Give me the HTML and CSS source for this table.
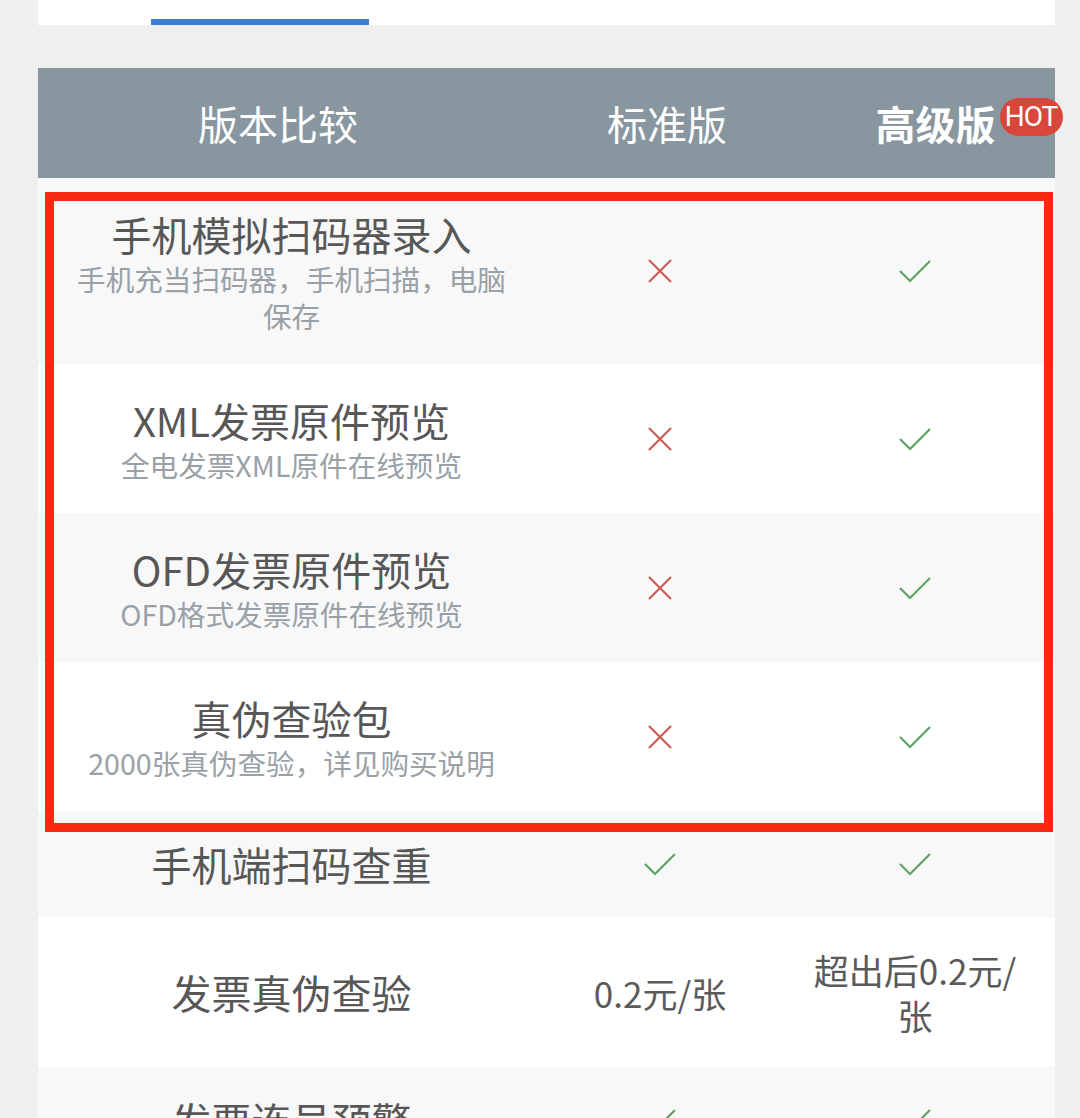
FILE: index.html
```html
<!DOCTYPE html>
<html lang="zh-CN">
<head>
  <meta charset="UTF-8" />
  <meta name="viewport" content="width=device-width, initial-scale=1" />
  <title>版本比较</title>
  <link rel="stylesheet" href="styles.css">
</head>
<body>
  <div class="page">
    <div class="tabs">
      <span class="tab-bar"></span>
    </div>

    <div class="compare">
      <div class="head">
        <div class="cell">版本比较</div>
        <div class="cell">标准版</div>
        <div class="cell"><span class="pro">高级版<span class="hot">HOT</span></span></div>
      </div>

      <div class="row grey">
        <div class="feature">
          <div class="title">手机模拟扫码器录入</div>
          <div class="desc">手机充当扫码器，手机扫描，电脑保存</div>
        </div>
        <div class="cell"><svg class="no" viewBox="0 0 26 26"><path d="M2 2L24 24M24 2L2 24"/></svg></div>
        <div class="cell"><svg class="yes" viewBox="0 0 32 24"><path d="M1 12L11 22L31 2"/></svg></div>
      </div>

      <div class="row">
        <div class="feature">
          <div class="title">XML发票原件预览</div>
          <div class="desc">全电发票XML原件在线预览</div>
        </div>
        <div class="cell"><svg class="no" viewBox="0 0 26 26"><path d="M2 2L24 24M24 2L2 24"/></svg></div>
        <div class="cell"><svg class="yes" viewBox="0 0 32 24"><path d="M1 12L11 22L31 2"/></svg></div>
      </div>

      <div class="row grey">
        <div class="feature">
          <div class="title">OFD发票原件预览</div>
          <div class="desc">OFD格式发票原件在线预览</div>
        </div>
        <div class="cell"><svg class="no" viewBox="0 0 26 26"><path d="M2 2L24 24M24 2L2 24"/></svg></div>
        <div class="cell"><svg class="yes" viewBox="0 0 32 24"><path d="M1 12L11 22L31 2"/></svg></div>
      </div>

      <div class="row">
        <div class="feature">
          <div class="title">真伪查验包</div>
          <div class="desc">2000张真伪查验，详见购买说明</div>
        </div>
        <div class="cell"><svg class="no" viewBox="0 0 26 26"><path d="M2 2L24 24M24 2L2 24"/></svg></div>
        <div class="cell"><svg class="yes" viewBox="0 0 32 24"><path d="M1 12L11 22L31 2"/></svg></div>
      </div>

      <div class="row grey short">
        <div class="feature">
          <div class="title">手机端扫码查重</div>
        </div>
        <div class="cell"><svg class="yes" viewBox="0 0 32 24"><path d="M1 12L11 22L31 2"/></svg></div>
        <div class="cell"><svg class="yes" viewBox="0 0 32 24"><path d="M1 12L11 22L31 2"/></svg></div>
      </div>

      <div class="row">
        <div class="feature">
          <div class="title">发票真伪查验</div>
        </div>
        <div class="cell"><span class="value">0.2元/张</span></div>
        <div class="cell"><span class="value">超出后0.2元/张</span></div>
      </div>

      <div class="row grey short">
        <div class="feature">
          <div class="title">发票连号预警</div>
        </div>
        <div class="cell"><svg class="yes" viewBox="0 0 32 24"><path d="M1 12L11 22L31 2"/></svg></div>
        <div class="cell"><svg class="yes" viewBox="0 0 32 24"><path d="M1 12L11 22L31 2"/></svg></div>
      </div>

      <div class="mark"></div>
    </div>
  </div>
</body>
</html>
```
FILE: styles.css
```css
body {
  margin: 0;
  background: #efefef;
  font-family: "Noto Sans CJK SC", "Noto Sans", sans-serif;
  height: 1118px;
  overflow: hidden;
}

.page {
  padding: 0 25px 0 38px;
}

.tabs {
  height: 25px;
  background: #fff;
  display: flex;
  align-items: flex-end;
}

.tab-bar {
  display: block;
  width: 218px;
  height: 6px;
  margin-left: 113px;
  background: #3d7bd6;
}

.compare {
  position: relative;
  margin-top: 43px;
}

.head {
  display: grid;
  grid-template-columns: 480px 298px 1fr;
  height: 110px;
  background: #88969f;
  color: #fff;
  font-size: 40px;
  line-height: 52px;
}

.head .cell {
  display: flex;
  align-items: center;
  justify-content: center;
}

.pro {
  position: relative;
  font-weight: bold;
}

.hot {
  position: absolute;
  left: calc(100% + 4px);
  top: 1px;
  width: 63px;
  height: 38px;
  border-radius: 19px;
  background: #d9473b;
  color: #fff;
  font-family: Roboto, "Liberation Sans", sans-serif;
  font-weight: normal;
  font-size: 28px;
  line-height: 38px;
  text-align: center;
  letter-spacing: -1px;
}

.row {
  display: grid;
  grid-template-columns: 507px 230px 1fr;
  padding: 30px 0;
  background: #fff;
}

.row.grey {
  background: #f8f8f9;
}

.row.short {
  padding: 27px 0;
}

.row .cell {
  display: flex;
  align-items: center;
  justify-content: center;
}

.feature {
  align-self: center;
  padding: 0 30px;
  text-align: center;
}

.title {
  font-size: 40px;
  line-height: 52px;
  color: #575757;
}

.desc {
  font-size: 28.6px;
  line-height: 37px;
  color: #99a1a7;
}

.value {
  max-width: 220px;
  font-size: 35px;
  line-height: 45px;
  color: #5a5a5a;
  text-align: center;
}

.no {
  width: 26px;
  height: 26px;
  fill: none;
  stroke: #cf5b56;
  stroke-width: 2.2;
}

.yes {
  width: 32px;
  height: 24px;
  fill: none;
  stroke: #5ea364;
  stroke-width: 2.2;
}

/* annotation frame over the four new features */
.mark {
  position: absolute;
  left: 7px;
  right: 2px;
  top: 124px;
  height: 640px;
  box-sizing: border-box;
  border: 9px solid #f52a0e;
}
```
